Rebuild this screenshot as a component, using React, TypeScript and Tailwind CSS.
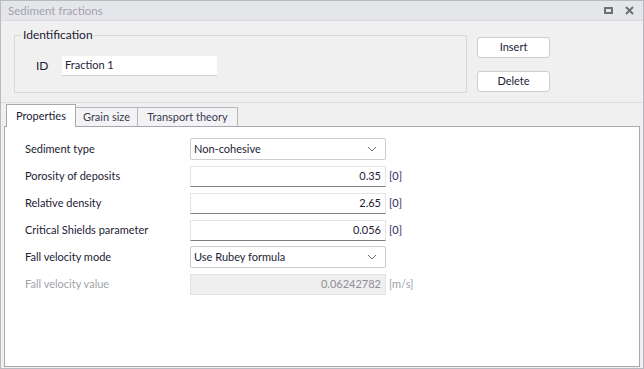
import React from 'react';

function Chevron() {
  return (
    <svg width="10" height="6" viewBox="0 0 10 6" className="text-[#6a6a70]">
      <path d="M1 1 L5 5 L9 1" fill="none" stroke="currentColor" strokeWidth="1" />
    </svg>
  );
}

function Dropdown({ value }: { value: string }) {
  return (
    <div className="w-[196px] h-[22px] bg-white border border-[#cdcdd2] rounded-[2px] flex items-center pl-[3px] pr-[8px] justify-between">
      <span>{value}</span>
      <Chevron />
    </div>
  );
}

function NumberField({ value, unit, disabled }: { value: string; unit: string; disabled?: boolean }) {
  return (
    <div className="flex items-center">
      <div
        className={
          disabled
            ? 'w-[196px] h-[21px] flex items-center justify-end pr-[4px] border border-[#e3e3e6] bg-[#efefef] text-[#8e8e94]'
            : 'w-[196px] h-[21px] flex items-center justify-end pr-[4px] border border-[#e3e3e6] border-b-[#7d7d85] bg-white'
        }
      >
        {value}
      </div>
      <span className={disabled ? 'ml-[3px] text-[#a2a2a8]' : 'ml-[3px] text-[#2b2b63]'}>{unit}</span>
    </div>
  );
}

function Row({ label, children, muted }: { label: string; children: React.ReactNode; muted?: boolean }) {
  return (
    <div className="flex items-center h-[22px]">
      <div className={muted ? 'w-[165px] text-[#a2a2a8]' : 'w-[165px]'}>{label}</div>
      {children}
    </div>
  );
}

export default function App() {
  const tabs = ['Properties', 'Grain size', 'Transport theory'];
  return (
    <div className="w-[644px] h-[369px] flex flex-col bg-[#f0f0f0] border border-[#b9b9c0] font-[Lato,sans-serif] text-[11px] text-[#1c1c36] overflow-hidden">
      {/* Title bar */}
      <div className="h-[20px] bg-[#e5e6ea] flex items-center justify-between pl-[7px] pr-[9px] shrink-0 border-b border-[#dadade]">
        <span className="text-[11.5px] text-[#a3a3ab]">Sediment fractions</span>
        <div className="flex items-center gap-[12px]">
          <div className="w-[9px] h-[7px] border-2 border-[#6e6e76]" />
          <svg width="9" height="9" viewBox="0 0 9 9">
            <path d="M1 1 L8 8 M8 1 L1 8" stroke="#6e6e76" strokeWidth="2" />
          </svg>
        </div>
      </div>

      {/* Identification area */}
      <div className="flex h-[81px] shrink-0 pt-[5px]">
        <fieldset className="ml-[13px] w-[453px] h-[67px] border border-[#d8d8dc] px-[7px] pb-0">
          <legend className="px-[1px] text-[12px] text-[#1c1c36]">Identification</legend>
          <div className="flex items-center mt-[12px] ml-[14px]">
            <span className="w-[26px] text-[12px]">ID</span>
            <div className="w-[155px] h-[20px] bg-white border-b border-[#d0d0d4] flex items-center pl-[3px]">
              Fraction 1
            </div>
          </div>
        </fieldset>
        <div className="ml-[10px] flex flex-col gap-[13px] pt-[11px]">
          <button className="w-[73px] h-[21px] bg-white border border-[#cdcdd2] rounded-[3px] text-[#1c1c36]">Insert</button>
          <button className="w-[73px] h-[21px] bg-white border border-[#cdcdd2] rounded-[3px] text-[#1c1c36]">Delete</button>
        </div>
      </div>

      <div className="h-px bg-[#dcdce0] shrink-0" />

      {/* Tabs */}
      <div className="flex flex-col flex-1 px-[3px] pb-[1px] pt-px">
        <div className="flex items-end h-[22px] pl-[2px] shrink-0">
          {tabs.map((t, i) =>
            i === 0 ? (
              <div
                key={t}
                className="h-[23px] w-[70px] justify-center bg-white border border-b-0 border-[#a7a7ae] flex items-center relative -mb-px z-10"
              >
                {t}
              </div>
            ) : (
              <div
                key={t}
                className={
                  i === 1
                    ? 'h-[19px] w-[62px] justify-center bg-[#f3f3f5] border border-b-0 border-l-0 border-[#b5b5bb] flex items-center text-[#3a3a50]'
                    : 'h-[19px] w-[100px] justify-center bg-[#f3f3f5] border border-b-0 border-l-0 border-[#b5b5bb] flex items-center text-[#3a3a50]'
                }
              >
                {t}
              </div>
            )
          )}
        </div>
        <div className="flex-1 bg-white border border-[#a7a7ae] pl-[20px] pt-[11px] flex flex-col gap-[5px]">
          <Row label="Sediment type">
            <Dropdown value="Non-cohesive" />
          </Row>
          <Row label="Porosity of deposits">
            <NumberField value="0.35" unit="[0]" />
          </Row>
          <Row label="Relative density">
            <NumberField value="2.65" unit="[0]" />
          </Row>
          <Row label="Critical Shields parameter">
            <NumberField value="0.056" unit="[0]" />
          </Row>
          <Row label="Fall velocity mode">
            <Dropdown value="Use Rubey formula" />
          </Row>
          <Row label="Fall velocity value" muted>
            <NumberField value="0.06242782" unit="[m/s]" disabled />
          </Row>
        </div>
      </div>
    </div>
  );
}
